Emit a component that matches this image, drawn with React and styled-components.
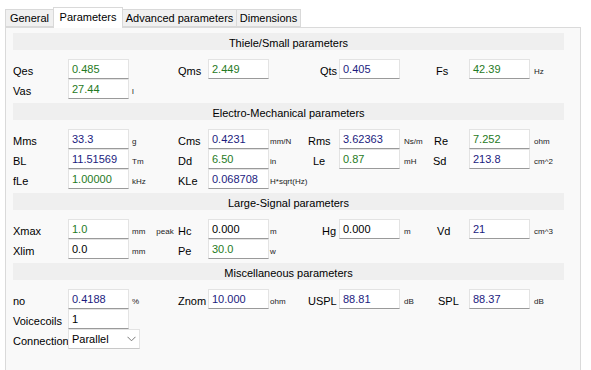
import React from "react";
import styled, { createGlobalStyle } from "styled-components";

const Global = createGlobalStyle`
  body {
    margin: 0;
    background: #ffffff;
    font-family: "Liberation Sans", Arial, sans-serif;
    font-size: 11px;
    color: #000;
  }
`;

const TabBar = styled.div`
  display: flex;
  align-items: flex-end;
  padding: 7px 0 0 5px;
`;

const Tab = styled.div`
  position: relative;
  z-index: ${(p) => (p.active ? 2 : 1)};
  box-sizing: border-box;
  width: ${(p) => p.w}px;
  height: ${(p) => (p.active ? 21 : 18)}px;
  margin-right: -1px;
  margin-bottom: ${(p) => (p.active ? -1 : 0)}px;
  border: 1px solid #d9d9d9;
  border-bottom: ${(p) => (p.active ? "none" : "1px solid #d9d9d9")};
  background: ${(p) => (p.active ? "#ffffff" : "#f0f0f0")};
  text-align: center;
  line-height: ${(p) => (p.active ? 18 : 17)}px;
  white-space: nowrap;
`;

const Panel = styled.div`
  box-sizing: border-box;
  width: 576px;
  min-height: 350px;
  margin-left: 5px;
  padding: 5px 16px 0 7px;
  border: 1px solid #dadada;
  background: #f9f9f9;
`;

const Header = styled.div`
  height: 17px;
  line-height: 20px;
  background: #efefef;
  text-align: center;
  overflow: hidden;
`;

const Grid = styled.div`
  display: grid;
  grid-template-columns: 55px 61px 49px 30px 61px 39px 31px 60px 33px 37px 60px 34px;
  grid-auto-rows: 20px;
  padding: 9px 0 4px;
`;

const Label = styled.div`
  height: 20px;
  line-height: 24px;
  padding-left: ${(p) => p.indent || 0}px;
  white-space: nowrap;
`;

const Field = styled.div`
  box-sizing: border-box;
  width: ${(p) => p.w || 61}px;
  height: 20px;
  padding: 0 3px;
  line-height: 18px;
  background: #ffffff;
  border: 1px solid #e3e3e3;
  border-bottom-color: #9a9a9a;
  color: ${(p) => p.color};
  white-space: nowrap;
  overflow: hidden;
`;

const SelectBox = styled(Field)`
  width: 72px;
  display: flex;
  justify-content: space-between;
  align-items: center;
  border-bottom-color: #c8c8c8;
  color: #000;
  position: relative;
  z-index: 1;
`;

const Unit = styled.div`
  display: flex;
  gap: 11px;
  height: 20px;
  line-height: 25px;
  padding-left: ${(p) => p.pad}px;
  font-size: 8px;
  color: #222;
  white-space: nowrap;
`;

const COLORS = { g: "#1f7a24", b: "#1b1b7e", k: "#000000" };
const UNIT_PAD = [3, 1, 5, 5];

const sections = [
  {
    title: "Thiele/Small parameters",
    rows: [
      [
        { l: "Qes", v: "0.485", c: "g" },
        { l: "Qms", v: "2.449", c: "g" },
        { l: "Qts", v: "0.405", c: "b", indent: 12 },
        { l: "Fs", v: "42.39", c: "g", u: "Hz", indent: 4 },
      ],
      [{ l: "Vas", v: "27.44", c: "g", u: "l" }],
    ],
  },
  {
    title: "Electro-Mechanical parameters",
    rows: [
      [
        { l: "Mms", v: "33.3", c: "b", u: "g" },
        { l: "Cms", v: "0.4231", c: "b", u: "mm/N" },
        { l: "Rms", v: "3.62363", c: "b", u: "Ns/m" },
        { l: "Re", v: "7.252", c: "g", u: "ohm", indent: 2 },
      ],
      [
        { l: "BL", v: "11.51569", c: "b", u: "Tm" },
        { l: "Dd", v: "6.50", c: "g", u: "in" },
        { l: "Le", v: "0.87", c: "g", u: "mH", indent: 5 },
        { l: "Sd", v: "213.8", c: "b", u: "cm^2", indent: 1 },
      ],
      [
        { l: "fLe", v: "1.00000", c: "g", u: "kHz" },
        { l: "KLe", v: "0.068708", c: "b", u: "H*sqrt(Hz)" },
      ],
    ],
  },
  {
    title: "Large-Signal parameters",
    rows: [
      [
        { l: "Xmax", v: "1.0", c: "g", u: "mm", extra: "peak" },
        { l: "Hc", v: "0.000", c: "k", u: "m" },
        { l: "Hg", v: "0.000", c: "k", u: "m", indent: 14 },
        { l: "Vd", v: "21", c: "b", u: "cm^3", indent: 5 },
      ],
      [
        { l: "Xlim", v: "0.0", c: "k", u: "mm" },
        { l: "Pe", v: "30.0", c: "g", u: "w" },
      ],
    ],
  },
  {
    title: "Miscellaneous parameters",
    rows: [
      [
        { l: "no", v: "0.4188", c: "b", u: "%" },
        { l: "Znom", v: "10.000", c: "b", u: "ohm" },
        { l: "USPL", v: "88.81", c: "b", u: "dB" },
        { l: "SPL", v: "88.37", c: "b", u: "dB", indent: 6 },
      ],
      [{ l: "Voicecoils", v: "1", c: "k" }],
      [{ l: "Connection", select: "Parallel" }],
    ],
  },
];

const Chevron = () => (
  <svg width="9" height="6" viewBox="0 0 9 6">
    <path d="M0.5 0.8 L4.5 4.8 L8.5 0.8" fill="none" stroke="#777" strokeWidth="1" />
  </svg>
);

const Cells = ({ f, col }) => {
  if (!f) {
    return (
      <>
        <div />
        <div />
        <div />
      </>
    );
  }
  return (
    <>
      <Label indent={f.indent}>{f.l}</Label>
      {f.select ? (
        <SelectBox>
          <span>{f.select}</span>
          <Chevron />
        </SelectBox>
      ) : (
        <Field color={COLORS[f.c]}>{f.v}</Field>
      )}
      <Unit pad={UNIT_PAD[col]}>
        {f.u && <span>{f.u}</span>}
        {f.extra && <span>{f.extra}</span>}
      </Unit>
    </>
  );
};

const Section = ({ title, rows }) => (
  <>
    <Header>{title}</Header>
    <Grid>
      {rows.map((row, i) =>
        [0, 1, 2, 3].map((col) => <Cells key={`${i}-${col}`} f={row[col]} col={col} />)
      )}
    </Grid>
  </>
);

const tabs = [
  { name: "General", w: 49 },
  { name: "Parameters", w: 70, active: true },
  { name: "Advanced parameters", w: 115 },
  { name: "Dimensions", w: 65 },
];

const App = () => {
  return (
    <>
      <Global />
      <TabBar>
        {tabs.map((t) => (
          <Tab key={t.name} w={t.w} active={t.active}>
            {t.name}
          </Tab>
        ))}
      </TabBar>
      <Panel>
        {sections.map((s) => (
          <Section key={s.title} title={s.title} rows={s.rows} />
        ))}
      </Panel>
    </>
  );
};

export default App;
